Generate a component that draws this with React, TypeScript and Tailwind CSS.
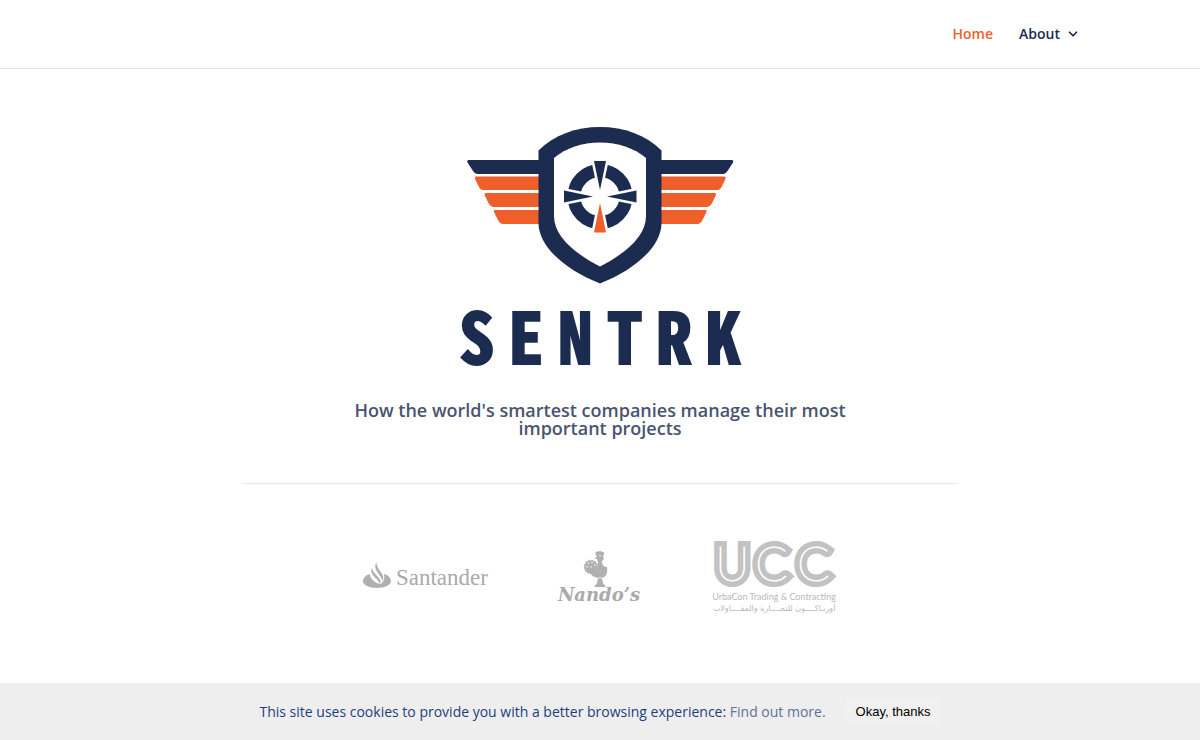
import { ChevronDown } from 'lucide-react'

const NAVY = '#1c2b50'
const ORANGE = '#ee5f2a'
const GREY = '#b0b0b0'

// Left wing; the right one is the same drawing mirrored.
function Wing() {
  return (
    <g>
      <path d="M19 45H90V59H27Q25 59 23 56L17.500 47.500Q16.500 45 19 45Z" fill={NAVY} />
      <path d="M26 61.500H90V75H33Q31 75 29.500 73L25 64Q24.500 61.500 26 61.500Z" fill={ORANGE} />
      <path d="M35.500 78H90V92H43Q41 92 39 89L34.500 80Q34.500 78 35.500 78Z" fill={ORANGE} />
      <path d="M44.500 95H90V109H53Q50 109 48 105L44 97Q43.500 95 44.500 95Z" fill={ORANGE} />
    </g>
  )
}

function Crest() {
  return (
    <svg viewBox="0 0 300 180" className="h-[180px] w-[300px]" aria-hidden="true">
      <Wing />
      <g transform="matrix(-1 0 0 1 300.500 0)">
        <Wing />
      </g>
      <path
        d="M88.500 35.500C104 20 126 12 150 12S196 20 211.500 35.500V108C211.500 132 184 155 150 168.500C116 155 88.500 132 88.500 108Z"
        fill={NAVY}
      />
      <path
        d="M104 43C116 33 132 27.500 150 27.500S184 33 196 43V101C196 120 178 137 150 151.500C122 137 104 120 104 101Z"
        fill="#fff"
      />
      <circle cx="150" cy="81.500" r="26" fill="none" stroke={NAVY} strokeWidth="13" />
      <g stroke="#fff" strokeWidth="5">
        <path d="M144 46H156L150 75Z" />
        <path d="M144 117H156L150 88Z" />
        <path d="M114 75.500V87.500L143 81.500Z" />
        <path d="M186 75.500V87.500L157 81.500Z" />
      </g>
      <path d="M144 46H156L150 75Z" fill={NAVY} />
      <path d="M144 117.500H156L150 88Z" fill={ORANGE} />
      <path d="M114 75.500V87.500L143 81.500Z" fill={NAVY} />
      <path d="M186.500 75.500V87.500L157 81.500Z" fill={NAVY} />
    </svg>
  )
}

function Wordmark() {
  return (
    <h1
      aria-label="SENTRK"
      className="mt-0.5 grid w-[296px] grid-cols-6 justify-items-center font-['Noto_Sans_Mono_CJK_SC','DejaVu_Sans_Mono',monospace] text-[70px] leading-[74px] font-bold text-[#1c2b50] [-webkit-text-stroke:2px_#1c2b50]"
    >
      {'SENTRK'.split('').map((letter) => (
        <span key={letter}>{letter}</span>
      ))}
    </h1>
  )
}

function Santander() {
  return (
    <div className="flex items-center gap-1">
      <svg viewBox="0 0 30 28" className="mb-1 h-7 w-[30px]" fill={GREY} aria-hidden="true">
        <path d="M8 12C4 13 1 16 1 19C1 23 7 26 15 26S29 23 29 19C29 16 26 13 22 12C23 16 22 19 19 22C15 22 8 18 8 12Z" />
        <path d="M10 6C6.500 13 16 16 18 22C21.500 16 11 13 10 6Z" />
        <path d="M14.500 0C10 8 19 12 20.500 19C24.500 12 14 8 14.500 0Z" />
      </svg>
      <span className="font-['Liberation_Serif',serif] text-[23px] leading-7 text-[#aaaaaa]">Santander</span>
    </div>
  )
}

function Nandos() {
  return (
    <div className="flex flex-col items-center pb-0.5">
      <svg viewBox="0 0 40 36" className="h-9 w-10" fill={GREY} aria-hidden="true">
        <path d="M17 4C15 0 19 0 19.500 1C20 -1 22 -1 22.500 1C25 0 26 3 24 5L25 8L23 10C23 14 25 16 28 16C29 24 26 26 23 27L24 32L27 36H15L18 32L19 27C14 26 12 24 12 21C17 22 21 17 18 8L15 7L18 6Z" />
        <circle cx="12" cy="16" r="6.500" strokeWidth="1.500" stroke={GREY} strokeDasharray="2 1" />
        <g fill="#fff">
          <circle cx="8" cy="16" r=".7" />
          <circle cx="9.500" cy="12.500" r=".7" />
          <circle cx="13" cy="11.500" r=".7" />
          <circle cx="16" cy="14" r=".7" />
          <circle cx="12" cy="16" r=".7" />
          <circle cx="21" cy="4.500" r=".7" />
        </g>
        <path d="M19 27H24" stroke="#fff" strokeWidth=".7" />
      </svg>
      <span className="font-['DejaVu_Serif',serif] text-[18px] leading-4 font-bold text-[#aaaaaa] italic">Nando’s</span>
    </div>
  )
}

// The monogram is two parallel bands: a wide outline with a white line down its middle.
function Ucc() {
  return (
    <div className="flex w-32 flex-col items-center font-['Lato',sans-serif] text-[#b8b8b8]">
      <svg viewBox="0 0 128 50" className="h-[50px] w-32 overflow-visible" aria-label="UCC">
        <g fontFamily="Lato" fontWeight="100" fontSize="48" fill="none" strokeLinejoin="miter">
          <text x="5 45 87" y="40" stroke="#c2c2c2" strokeWidth="12">UCC</text>
          <text x="5 45 87" y="40" stroke="#fff" strokeWidth="1">UCC</text>
        </g>
      </svg>
      <span className="text-[9px] leading-3 whitespace-nowrap">UrbaCon Trading &amp; Contracting</span>
      <span dir="rtl" className="font-['DejaVu_Sans',sans-serif] text-[8px] leading-3 whitespace-nowrap">
        أوربـاكــــون للتجــــارة والمقــــاولات
      </span>
    </div>
  )
}

export default function App() {
  return (
    <div className="flex min-h-screen flex-col bg-white font-['Open_Sans',sans-serif]">
      <header className="border-b border-[#e2e2e2]">
        <nav className="mx-auto flex h-[68px] w-4/5 items-center justify-end gap-[26px] text-sm font-semibold">
          <a href="#home" className="text-[#ee5f2a]">Home</a>
          <a href="#about" className="flex items-center gap-1.5 text-[#1c2b50]">
            About
            <ChevronDown size={14} strokeWidth={3} />
          </a>
        </nav>
      </header>

      <main className="flex flex-1 flex-col items-center pt-[46px]">
        <Crest />
        <Wordmark />
        <h2 className="mt-[30px] w-[500px] text-center text-[18px] leading-[18px] font-semibold text-[#4a5470]">
          How the world's smartest companies manage their most important projects
        </h2>
        <hr className="mt-[46px] w-[714px] border-[#e8e8e8]" />
        <section aria-label="Customers" className="mt-[57px] flex items-center gap-[70px]">
          <Santander />
          <Nandos />
          <Ucc />
        </section>
      </main>

      <footer className="flex h-[57px] items-center justify-center gap-5 bg-[#eeeeee] text-sm text-[#1d3f7f]">
        <p>
          This site uses cookies to provide you with a better browsing experience:{' '}
          <a href="#cookies" className="text-[#5f7292]">Find out more.</a>
        </p>
        <button type="button" className="rounded bg-[#f0f0f0] px-2.5 pt-1.5 pb-1 font-['Liberation_Sans',sans-serif] text-[13px] text-black">
          Okay, thanks
        </button>
      </footer>
    </div>
  )
}
